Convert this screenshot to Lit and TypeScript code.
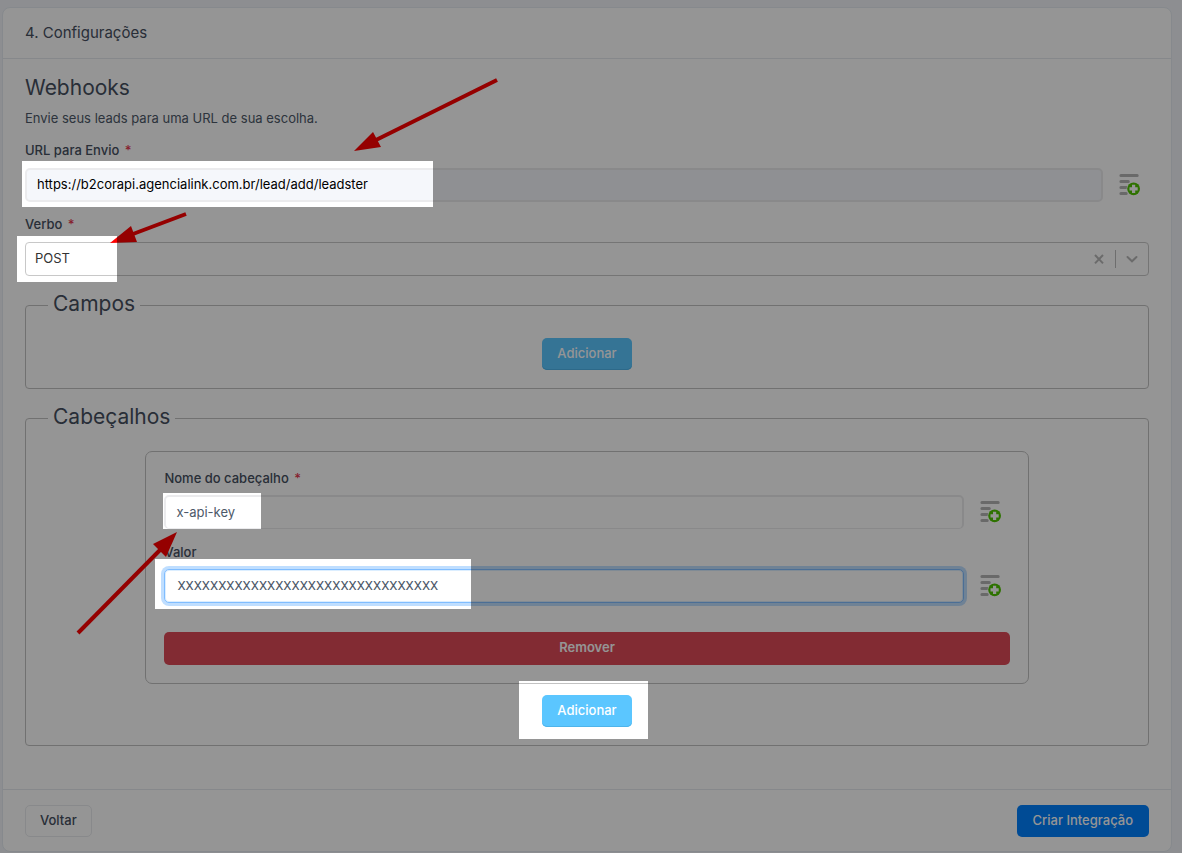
import { LitElement, html, css, svg } from "lit";
import { customElement, property, state } from "lit/decorators.js";

@customElement("insert-field-button")
class InsertFieldButton extends LitElement {
  @property() label = "Inserir campo";

  static styles = css`
    :host { display: block; width: 22px; height: 22px; }
    button { display: block; padding: 0; border: 0; background: none; cursor: pointer; }
    svg { display: block; }
  `;

  render() {
    return html`<button type="button" aria-label=${this.label}>
      <svg width="22" height="22" viewBox="0 0 22 22" aria-hidden="true">
        <g fill="none" stroke="#b4b4b4" stroke-width="3" stroke-linecap="round">
          <path d="M1.9 1.6H18.2M1.9 7.6H9.3M1.9 13.6H7.5M1.9 19.5H7.2" />
        </g>
        <circle cx="14.6" cy="14.8" r="7" fill="#fff" />
        <circle cx="14.6" cy="14.8" r="6.4" fill="#4fc400" />
        <path d="M13 10.7h3.2v2.5h2.5v3.2h-2.5v2.5H13v-2.5h-2.5v-3.2H13z" fill="#fff" />
      </svg>
    </button>`;
  }
}

type Arrow = { from: [number, number]; neck: [number, number]; head: string };

const ARROWS: Arrow[] = [
  { from: [497, 80], neck: [376, 140], head: "354,151 373,132 381,147" },
  { from: [186, 214], neck: [133, 234], head: "110,243 131,226 137,242" },
  { from: [78, 633], neck: [161, 549], head: "177,532 153,544 166,557" },
];

const SPOTLIGHTS: [number, number, number, number][] = [
  [22, 161, 411, 46],
  [17, 236, 100, 46],
  [163, 493, 98, 36],
  [155, 559, 316, 50],
  [519, 681, 129, 58],
];

@customElement("tour-overlay")
class TourOverlay extends LitElement {
  static styles = css`
    :host { position: absolute; inset: 0; pointer-events: none; }
    svg { display: block; width: 100%; height: 100%; }
  `;

  render() {
    return html`<svg aria-hidden="true">
      <mask id="holes" maskUnits="userSpaceOnUse" x="0" y="0" width="100%" height="100%">
        <rect width="100%" height="100%" fill="#fff" />
        ${SPOTLIGHTS.map(([x, y, w, h]) => svg`<rect x=${x} y=${y} width=${w} height=${h} fill="#000" />`)}
      </mask>
      ${ARROWS.map(
        (a) => svg`<path d=${`M${a.from.join(" ")}L${a.neck.join(" ")}`} stroke="#f00" stroke-width="4" />
          <polygon points=${a.head} fill="#f00" />`
      )}
      <rect width="100%" height="100%" fill="#000" fill-opacity="0.416" mask="url(#holes)" />
    </svg>`;
  }
}

@customElement("app-root")
class AppRoot extends LitElement {
  @state() private url = "https://b2corapi.agencialink.com.br/lead/add/leadster";
  @state() private headerName = "x-api-key";
  @state() private headerValue = "XXXXXXXXXXXXXXXXXXXXXXXXXXXXXXXX";

  static styles = css`
    :host {
      display: block;
      position: relative;
      box-sizing: border-box;
      min-height: 100vh;
      padding: 7px 10px 0 2px;
      background: #f1f4f9;
      color: #4d5969;
      font: 400 13px/20px Inter, "Open Sans", sans-serif;
    }
    * { box-sizing: border-box; }
    h1, h2, p { margin: 0; font-weight: 400; }
    .card { background: #fff; border: 1px solid #e6ebf1; border-radius: 8px; }
    .card-header { padding: 14px 22px 15px; border-bottom: 1px solid #e6e9ee; }
    .card-header h1 { font-size: 15px; line-height: 21px; color: #46505f; }
    .card-body { padding: 16px 22px 43px; }
    .title { font-size: 21px; line-height: 26px; color: #46505f; }
    .lead { margin-top: 7px; }
    .field-label {
      display: block;
      margin-top: 12px;
      margin-bottom: 8px;
      font-weight: 500;
      color: #46505f;
    }
    .required { margin-left: 2px; color: #e63750; }
    .row { display: flex; align-items: center; gap: 16px; }
    .row insert-field-button { flex: none; margin-right: 8px; }
    .input {
      flex: 1;
      min-width: 0;
      height: 34px;
      padding: 0 10px 2px;
      border: 2px solid #ebebed;
      border-radius: 5px;
      background: #fff;
      color: #4d5969;
      font: inherit;
      outline: 0;
    }
    .input.locked { background: #f5f7fb; color: #000; }
    .input.name { border-bottom-width: 1px; }
    .input.active {
      border: 1px solid #80bdff;
      padding: 0 12px 2px;
      font-family: Roboto, "Open Sans", sans-serif;
      box-shadow: 0 0 0 3px #bfdeff, inset 0 0 0 1px #dceeff;
    }
    .select { display: grid; align-items: center; }
    .select > * { grid-area: 1 / 1; }
    select {
      appearance: none;
      width: 100%;
      height: 34px;
      padding: 0 9px 2px;
      border: 1px solid #c8c8c8;
      border-radius: 4px;
      background: #fff;
      color: #333;
      font: inherit;
    }
    .indicators {
      display: flex;
      align-items: center;
      justify-self: end;
      padding-right: 10px;
      gap: 9px;
      pointer-events: none;
    }
    .indicators svg { display: block; }
    .clear { padding: 0; border: 0; background: none; pointer-events: auto; }
    .separator { width: 1px; height: 18px; background: #bcbcbc; }
    fieldset {
      min-width: 0;
      margin: 16px 0 0;
      padding: 20px 9px 18px;
      border: 1px solid #c2c2c2;
      border-radius: 4px;
    }
    legend {
      margin-left: 13px;
      padding: 0 5px 2px;
      font-size: 21px;
      line-height: 24px;
      color: #46505f;
    }
    .center { display: flex; justify-content: center; }
    .header-item {
      width: 80%;
      margin: 0 auto 11px;
      padding: 3px 18px 18px;
      border: 1px solid #c2c2c2;
      border-radius: 7px;
    }
    .header-item .field-label { margin-top: 13px; margin-bottom: 7px; }
    .btn {
      height: 32px;
      padding: 0 14px 3px;
      border: 1px solid transparent;
      border-radius: 5px;
      font: 500 13px/20px Inter, "Open Sans", sans-serif;
      color: #fff;
    }
    .btn.info { background: #5bc6ff; border: 0; padding: 0 15px 2px; box-shadow: inset 0 -1px 0 #4eb4ea; }
    .btn.danger { width: 100%; height: 33px; margin-top: 29px; background: #de4b58; font-weight: 600; }
    .btn.primary { padding: 0 15px 3px; background: #0080ff; }
    .btn.light { background: #fff; border: 1px solid #e9ebee; color: #46505f; }
    .card-footer {
      display: flex;
      justify-content: space-between;
      padding: 15px 22px 14px;
      border-top: 1px solid #e6e9ee;
    }
  `;

  private row(id: string, kind: string, value: string, set: (v: string) => void, readonly = false) {
    return html`<div class="row">
      <input
        id=${id}
        class="input ${kind}"
        type="text"
        .value=${value}
        ?readonly=${readonly}
        @input=${(e: Event) => set((e.target as HTMLInputElement).value)}
      />
      <insert-field-button></insert-field-button>
    </div>`;
  }

  render() {
    return html`
      <main class="card">
        <header class="card-header"><h1>4. Configurações</h1></header>
        <section class="card-body">
          <h2 class="title">Webhooks</h2>
          <p class="lead">Envie seus leads para uma URL de sua escolha.</p>

          <label class="field-label" for="url">URL para Envio <span class="required">*</span></label>
          ${this.row("url", "locked", this.url, (v) => (this.url = v), true)}

          <label class="field-label" for="verb">Verbo <span class="required">*</span></label>
          <div class="select">
            <select id="verb">
              <option selected>POST</option>
            </select>
            <div class="indicators">
              <button class="clear" type="button" aria-label="Limpar">
                <svg width="14" height="14" viewBox="0 0 14 14">
                  <path d="M3 3 11 11.4M11 3 3 11.4" stroke="#b8b8b8" stroke-width="2" />
                </svg>
              </button>
              <span class="separator"></span>
              <svg width="14" height="14" viewBox="0 0 14 14">
                <path d="M2.5 5 7 9.3 11.5 5" fill="none" stroke="#b8b8b8" stroke-width="2" stroke-linecap="round" />
              </svg>
            </div>
          </div>

          <fieldset>
            <legend>Campos</legend>
            <div class="center"><button class="btn info" type="button">Adicionar</button></div>
          </fieldset>

          <fieldset>
            <legend>Cabeçalhos</legend>
            <div class="header-item">
              <label class="field-label" for="name">Nome do cabeçalho <span class="required">*</span></label>
              ${this.row("name", "name", this.headerName, (v) => (this.headerName = v))}
              <label class="field-label" for="value">Valor</label>
              ${this.row("value", "active", this.headerValue, (v) => (this.headerValue = v))}
              <button class="btn danger" type="button">Remover</button>
            </div>
            <div class="center"><button class="btn info" type="button">Adicionar</button></div>
          </fieldset>
        </section>
        <footer class="card-footer">
          <button class="btn light" type="button">Voltar</button>
          <button class="btn primary" type="button">Criar Integração</button>
        </footer>
      </main>
      <tour-overlay></tour-overlay>
    `;
  }
}
